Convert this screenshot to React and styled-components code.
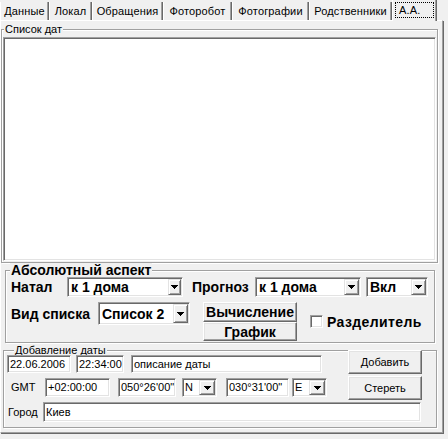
import React from 'react';
import styled, { createGlobalStyle, css } from 'styled-components';

const Global = createGlobalStyle`
  html, body { margin: 0; padding: 0; background: #f0f0f0; }
  body {
    width: 448px; height: 439px; overflow: hidden;
    font-family: "Liberation Sans", Arial, sans-serif;
    font-size: 11px; color: #000;
  }
`;

const FONT = `"Liberation Sans", Arial, sans-serif`;

const Window = styled.div`
  width: 448px;
  height: 439px;
  display: flex;
  flex-direction: column;
  background: #f0f0f0;
`;

const TabStrip = styled.div`
  display: flex;
  align-items: flex-start;
  height: 20px;
`;

const Tab = styled.div`
  box-sizing: border-box;
  width: ${p => p.$w}px;
  height: 18px;
  margin-top: 2px;
  display: flex;
  align-items: center;
  justify-content: center;
  border-left: 1px solid #fff;
  border-right: 1px solid #696969;
  box-shadow: inset -1px 0 0 #a0a0a0;
  background: #f0f0f0;
  font: 11px/13px ${FONT};
  letter-spacing: 0.15px;
  white-space: nowrap;
  ${p => p.$active && css`
    position: relative;
    z-index: 1;
    margin-top: 0;
    height: 21px;
    margin-bottom: -1px;
    padding-bottom: 1px;
  `}
`;

const Focus = styled.span`
  box-sizing: border-box;
  display: flex;
  align-items: center;
  padding-left: 3px;
  width: 39px;
  height: 16px;
  border: 1px dotted #000;
`;

const Page = styled.div`
  box-sizing: border-box;
  width: 443px;
  height: 413px;
  border-top: 1px solid #fff;
  border-left: 1px solid #fff;
  border-right: 1px solid #a0a0a0;
  border-bottom: 1px solid #a0a0a0;
  box-shadow: 1px 1px 0 #696969;
  display: flex;
  flex-direction: column;
  align-items: flex-start;
`;

const Group = styled.fieldset`
  box-sizing: border-box;
  min-width: 0;
  margin: ${p => p.$mt || 0}px 0 0 ${p => p.$ml || 0}px;
  width: ${p => p.$w}px;
  height: ${p => p.$h}px;
  padding: ${p => p.$pad};
  border: 1px solid #a0a0a0;
  box-shadow: inset 1px 1px 0 #fff, 1px 1px 0 #fff;
  display: flex;
  flex-direction: column;
`;

const Legend = styled.legend`
  padding: 0 1px;
  margin-left: ${p => p.$ml}px;
  background: #f0f0f0;
  white-space: nowrap;
  font: ${p => (p.$bold ? `bold 14px/14px ${FONT}` : `11px/${p.$lh || 11}px ${FONT}`)};
`;

const ListBox = styled.div`
  box-sizing: border-box;
  height: ${p => p.$h}px;
  background: #fff;
  border: 1px solid;
  border-color: #a0a0a0 #fff #fff #a0a0a0;
  box-shadow: inset 1px 1px 0 #696969, inset -1px -1px 0 #e3e3e3;
`;

const Row = styled.div`
  display: flex;
  align-items: ${p => p.$align || 'center'};
  margin-top: ${p => p.$mt || 0}px;
  height: ${p => p.$h}px;
`;

const Label = styled.div`
  box-sizing: border-box;
  width: ${p => p.$w}px;
  padding-left: ${p => p.$pl || 0}px;
  white-space: nowrap;
  font: ${p => (p.$bold ? `bold 14px/16px ${FONT}` : `11px/13px ${FONT}`)};
`;

const Field = styled.div`
  box-sizing: border-box;
  width: ${p => p.$w}px;
  height: ${p => p.$h}px;
  margin-left: ${p => p.$ml || 0}px;
  background: #fff;
  border: 1px solid;
  border-color: #a0a0a0 #fff #fff #a0a0a0;
  box-shadow: inset 1px 1px 0 #696969, inset -1px -1px 0 #e3e3e3;
  display: flex;
  align-items: center;
  padding-left: ${p => (p.$bold ? 3 : 2)}px;
  white-space: nowrap;
  overflow: hidden;
  font: ${p => (p.$bold ? `bold 14px/16px ${FONT}` : `11px/13px ${FONT}`)};
`;

const ComboText = styled.span`
  flex: 1;
  overflow: hidden;
`;

const DropButton = styled.span`
  box-sizing: border-box;
  align-self: stretch;
  width: ${p => p.$w || 15}px;
  margin: 1px 1px 1px 0;
  background: #f0f0f0;
  border: 1px solid;
  border-color: #e3e3e3 #696969 #696969 #e3e3e3;
  box-shadow: inset 1px 1px 0 #fff, inset -1px -1px 0 #a0a0a0;
  display: flex;
  align-items: center;
  justify-content: center;
`;

const Arrow = () => (
  <svg width="7" height="4" viewBox="0 0 7 4" shapeRendering="crispEdges">
    <path d="M0 0h7v1h-1v1h-1v1h-1v1h-1v-1h-1v-1h-1v-1h-1z" fill="#000" />
  </svg>
);

const Combo = ({ w, h, ml, bold, bw, children }) => (
  <Field $w={w} $h={h} $ml={ml} $bold={bold}>
    <ComboText>{children}</ComboText>
    <DropButton $w={bw}><Arrow /></DropButton>
  </Field>
);

const Button = styled.div`
  box-sizing: border-box;
  width: ${p => p.$w}px;
  height: ${p => p.$h}px;
  background: #f0f0f0;
  border: 1px solid;
  border-color: #fff #696969 #696969 #fff;
  box-shadow: inset -1px -1px 0 #a0a0a0, inset 1px 1px 0 #e3e3e3;
  display: flex;
  align-items: center;
  justify-content: center;
  white-space: nowrap;
  font: ${p => (p.$bold ? `bold 14px/16px ${FONT}` : `11px/13px ${FONT}`)};
`;

const ButtonStack = styled.div`
  display: flex;
  flex-direction: column;
  margin-left: ${p => (p.$auto ? 'auto' : `${p.$ml || 0}px`)};
  margin-top: ${p => p.$mt || 0}px;
  margin-right: ${p => p.$mr || 0}px;
  gap: ${p => p.$gap || 0}px;
`;

const CheckRow = styled.label`
  display: flex;
  align-items: center;
  gap: 4px;
  margin-left: 13px;
  align-self: center;
  font: bold 14px/16px ${FONT};
  letter-spacing: 0.4px;
  white-space: nowrap;
`;

const CheckBox = styled.span`
  box-sizing: border-box;
  width: 13px;
  height: 13px;
  background: #fff;
  border: 1px solid;
  border-color: #a0a0a0 #fff #fff #a0a0a0;
  box-shadow: inset 1px 1px 0 #696969, inset -1px -1px 0 #e3e3e3;
`;

const LeftCol = styled.div`
  display: flex;
  align-items: center;
`;

const TopArea = styled.div`
  display: flex;
  align-items: flex-start;
`;

const Fields = styled.div`
  display: flex;
  flex-direction: column;
`;

const tabs = [
  ['Данные', 49],
  ['Локал', 43],
  ['Обращения', 71],
  ['Фоторобот', 69],
  ['Фотографии', 77],
  ['Родственники', 83],
];

export default function App() {
  return (
    <Window>
      <Global />
      <TabStrip>
        {tabs.map(([t, w]) => (
          <Tab key={t} $w={w}>{t}</Tab>
        ))}
        <Tab $w={45} $active>
          <Focus>А.А.</Focus>
        </Tab>
      </TabStrip>
      <Page>
        <Group $mt={3} $ml={0} $w={437} $h={239} $pad="2px 1px 1px 1px">
          <Legend $ml={1}>Список дат</Legend>
          <ListBox $h={224} />
        </Group>

        <Group $ml={4} $w={430} $h={80} $pad="0 0 1px 0">
          <Legend $bold $ml={4}>Абсолютный аспект</Legend>
          <Row $h={20}>
            <Label $bold $w={61} $pl={5}>Натал</Label>
            <Combo w={116} h={20} bold bw={13}>к 1 дома</Combo>
            <Label $bold $w={72} $pl={9}>Прогноз</Label>
            <Combo w={106} h={20} bold bw={15}>к 1 дома</Combo>
            <Combo w={62} h={20} ml={5} bold bw={15}>Вкл</Combo>
          </Row>
          <Row $h={39} $mt={5} $align="flex-start">
            <LeftCol>
              <Label $bold $w={92} $pl={5}>Вид списка</Label>
              <Combo w={92} h={23} bold bw={15}>Список 2</Combo>
            </LeftCol>
            <ButtonStack $ml={13}>
              <Button $bold $w={94} $h={20}>Вычисление</Button>
              <Button $bold $w={94} $h={19}>График</Button>
            </ButtonStack>
            <CheckRow>
              <CheckBox />
              Разделитель
            </CheckRow>
          </Row>
        </Group>

        <Group $mt={3} $ml={2} $w={434} $h={82} $pad="0 0 0 3px">
          <Legend $ml={7} $lh={9}>Добавление даты</Legend>
          <TopArea>
            <Fields>
              <Row $h={18}>
                <Field $w={64} $h={18}>22.06.2006</Field>
                <Field $w={48} $h={18} $ml={5}>22:34:00</Field>
                <Field $w={191} $h={18} $ml={7}>описание даты</Field>
              </Row>
              <Row $h={19} $mt={5}>
                <Label $w={38} $pl={4}>GMT</Label>
                <Field $w={65} $h={19}>+02:00:00</Field>
                <Field $w={58} $h={19} $ml={8}>050°26'00"</Field>
                <Combo w={35} h={19} ml={6} bw={16}>N</Combo>
                <Field $w={63} $h={19} $ml={9}>030°31'00"</Field>
                <Combo w={35} h={19} ml={3} bw={16}>E</Combo>
              </Row>
            </Fields>
            <ButtonStack $auto $mr={14} $mt={-5} $gap={2}>
              <Button $w={74} $h={24}>Добавить</Button>
              <Button $w={74} $h={24}>Стереть</Button>
            </ButtonStack>
          </TopArea>
          <Row $h={20} $mt={2}>
            <Label $w={36} $pl={1}>Город</Label>
            <Field $w={378} $h={20}>Киев</Field>
          </Row>
        </Group>
      </Page>
    </Window>
  );
}
